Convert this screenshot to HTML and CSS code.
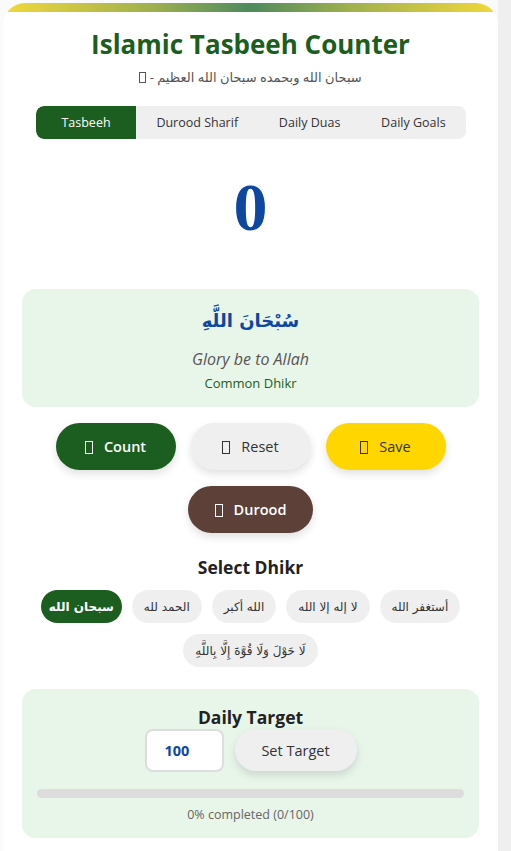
FILE: index.html
```html
<!DOCTYPE html>
<html lang="en">
<head>
<meta charset="utf-8">
<title>Islamic Tasbeeh Counter</title>
<link rel="stylesheet" href="styles.css">
</head>
<body>
<div class="page">
  <main class="card">
    <div class="topbar"></div>
    <header class="header">
      <h1 class="title">Islamic Tasbeeh Counter</h1>
      <p class="subtitle" dir="rtl">سبحان الله وبحمده سبحان الله العظيم - <span class="tofu"></span></p>
    </header>

    <nav class="tabs">
      <button class="tab tab-active">Tasbeeh</button>
      <button class="tab">Durood Sharif</button>
      <button class="tab">Daily Duas</button>
      <button class="tab">Daily Goals</button>
    </nav>

    <div class="counter">0</div>

    <section class="dhikr-card">
      <div class="dhikr-arabic" dir="rtl">سُبْحَانَ اللَّهِ</div>
      <div class="dhikr-meaning">Glory be to Allah</div>
      <div class="dhikr-type">Common Dhikr</div>
    </section>

    <div class="actions">
      <button class="btn btn-count"><span class="tofu"></span>Count</button>
      <button class="btn btn-reset"><span class="tofu"></span>Reset</button>
      <button class="btn btn-save"><span class="tofu"></span>Save</button>
      <button class="btn btn-durood"><span class="tofu"></span>Durood</button>
    </div>

    <h2 class="section-title">Select Dhikr</h2>
    <div class="chips">
      <button class="chip chip-active">سبحان الله</button>
      <button class="chip">الحمد لله</button>
      <button class="chip">الله أكبر</button>
      <button class="chip">لا إله إلا الله</button>
      <button class="chip">أستغفر الله</button>
      <button class="chip">لَا حَوْلَ وَلَا قُوَّةَ إِلَّا بِاللَّهِ</button>
    </div>

    <section class="target-card">
      <h2 class="target-title">Daily Target</h2>
      <div class="target-row">
        <input class="target-input" type="number" value="100">
        <button class="btn btn-target">Set Target</button>
      </div>
      <div class="progress"><div class="progress-fill" style="width:0%"></div></div>
      <div class="progress-text">0% completed (0/100)</div>
    </section>
  </main>
</div>
</body>
</html>
```

FILE: styles.css
```css
* { box-sizing: border-box; }

html, body {
  margin: 0;
  padding: 0;
  background: #f3f3f3;
  font-family: "Open Sans", "DejaVu Sans", sans-serif;
  color: #333;
}

.page {
  padding: 3px 13px 0 3px;
  background: linear-gradient(to right, #fafafa 0, #fafafa 498px, #efefef 498px);
  min-height: 851px;
}

.card {
  background: #fff;
  border-radius: 22px 22px 0 0;
  overflow: hidden;
  padding: 0 19px 20px;
  min-height: 848px;
}

.topbar {
  height: 9px;
  margin: 0 -19px;
  background: linear-gradient(to right, #f3d83c 0%, #9fb04f 30%, #4e8a5e 50%, #9fb04f 70%, #f3d83c 100%);
}

.header {
  text-align: center;
  padding-top: 16px;
}

.title {
  margin: 0;
  font-size: 26px;
  font-weight: 700;
  color: #1b5e20;
  line-height: 32px;
}

.subtitle {
  margin: 7px 0 0;
  font-size: 13px;
  color: #555;
  line-height: 20px;
}

.tofu {
  display: inline-block;
  width: 8px;
  height: 13px;
  border: 1.3px solid currentColor;
  vertical-align: -2px;
}

.subtitle .tofu {
  width: 7px;
  height: 11px;
  border-width: 1px;
  vertical-align: -1px;
}

.tabs {
  display: flex;
  margin: 19px 13px 0 14px;
  background: #efefef;
  border-radius: 8px;
  overflow: hidden;
  height: 33px;
}

.tab {
  flex: 1 1 auto;
  border: 0;
  background: transparent;
  font-family: inherit;
  font-size: 12.5px;
  color: #333;
  padding: 0 12px;
}

.tab-active {
  background: #1b5e20;
  color: #fff;
  flex: 0 0 100px;
  border-radius: 8px 0 0 8px;
}

.counter {
  text-align: center;
  font-family: "Liberation Serif", serif;
  font-weight: 700;
  font-size: 68px;
  line-height: 80px;
  color: #0d47a1;
  margin-top: 28px;
  height: 122px;
}

.dhikr-card {
  background: #e8f5e9;
  border-radius: 14px;
  text-align: center;
  padding: 17px 10px 14px;
}

.dhikr-arabic {
  font-family: "DejaVu Sans", sans-serif;
  font-weight: 700;
  font-size: 18px;
  color: #0d47a1;
  line-height: 30px;
}

.dhikr-meaning {
  margin-top: 12px;
  font-style: italic;
  font-size: 16px;
  color: #555;
  line-height: 22px;
}

.dhikr-type {
  margin-top: 3px;
  font-size: 13px;
  color: #1b5e20;
  line-height: 20px;
}

.actions {
  display: flex;
  flex-wrap: wrap;
  justify-content: center;
  gap: 16px 15px;
  margin-top: 16px;
}

.btn {
  border: 0;
  border-radius: 24px;
  font-family: inherit;
  font-size: 14.5px;
  font-weight: 600;
  height: 47px;
  padding: 0 16px;
  box-shadow: 0 4px 8px rgba(0,0,0,0.12);
  cursor: pointer;
}

.btn .tofu { margin-right: 11px; }

.btn-count, .btn-reset, .btn-save { width: 120px; }

.btn-count { background: #1b5e20; color: #fff; }
.btn-reset { background: #efefef; color: #333; font-weight: 500; }
.btn-save { background: #ffd600; color: #333; font-weight: 500; }
.btn-durood { background: #5d4037; color: #fff; width: 125px; }

.section-title {
  margin: 24px 0 0;
  text-align: center;
  font-size: 17.5px;
  font-weight: 700;
  color: #222;
  line-height: 20px;
}

.chips {
  display: flex;
  flex-wrap: wrap;
  justify-content: center;
  gap: 11px 10px;
  margin-top: 13px;
}

.chip {
  border: 0;
  background: #efefef;
  color: #333;
  border-radius: 17px;
  height: 33px;
  padding: 0 12px;
  font-family: "DejaVu Sans", sans-serif;
  font-size: 12px;
}

.chip-active {
  background: #1b5e20;
  color: #fff;
  font-weight: 700;
  padding: 0 8px;
}

.target-card {
  margin-top: 22px;
  background: #e8f5e9;
  border-radius: 14px;
  padding: 18px 15px 14px;
  text-align: center;
}

.target-title {
  margin: 0;
  font-size: 17.5px;
  font-weight: 700;
  color: #222;
  line-height: 20px;
}

.target-row {
  display: flex;
  justify-content: center;
  gap: 11px;
  margin-top: 2px;
}

.target-input {
  width: 79px;
  height: 43px;
  border: 2px solid #ddd;
  border-radius: 8px;
  background: #fff;
  font-family: inherit;
  font-size: 14.5px;
  font-weight: 700;
  color: #0d47a1;
  padding: 0 0 0 18px;
}

.btn-target {
  background: #efefef;
  color: #333;
  font-weight: 500;
  height: 42px;
  width: 122px;
  border-radius: 22px;
}

.progress {
  margin-top: 17px;
  height: 9px;
  background: #ddd;
  border-radius: 5px;
  overflow: hidden;
}

.progress-fill {
  height: 100%;
  background: #1b5e20;
}

.progress-text {
  margin-top: 8px;
  font-size: 12.5px;
  color: #666;
  line-height: 18px;
}
```
